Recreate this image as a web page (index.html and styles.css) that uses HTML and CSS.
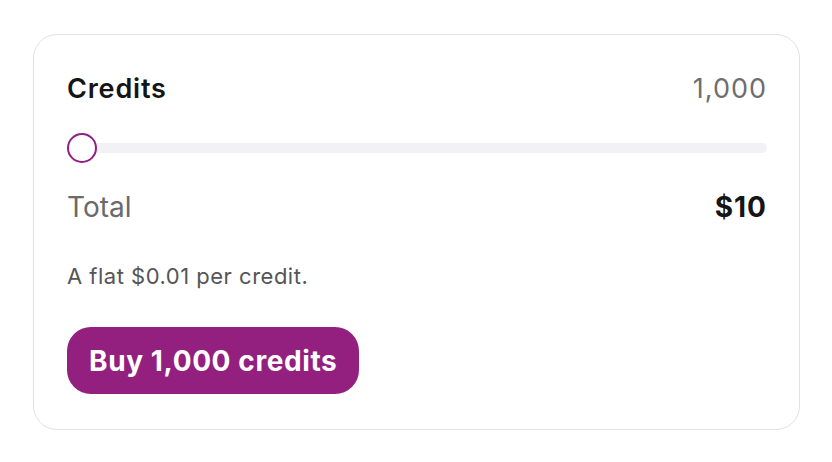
FILE: index.html
```html
<!DOCTYPE html>
<html lang="en">
<head>
  <meta charset="UTF-8" />
  <title>Buy credits</title>
  <link rel="stylesheet" href="styles.css">
</head>
<body>

  <div class="card">
    <div class="row">
      <span class="label">Credits</span>
      <span class="count">1,000</span>
    </div>

    <div class="slider">
      <div class="track"></div>
      <div class="thumb"></div>
    </div>

    <div class="row total-row">
      <span class="total">Total</span>
      <span class="price">$10</span>
    </div>

    <p class="note">A flat $0.01 per credit.</p>

    <button class="buy">Buy 1,000 credits</button>
  </div>

</body>
</html>
```

FILE: styles.css
```css
body {
  margin: 0;
  padding: 34px 33px;
  background: #fff;
  font-family: Inter, "Noto Sans", sans-serif;
}
.card {
  width: 767px;
  height: 396px;
  box-sizing: border-box;
  border: 1.5px solid #e2e2e4;
  border-radius: 24px;
  padding: 38px 32px 0 33px;
}
.row {
  display: flex;
  justify-content: space-between;
  align-items: center;
  height: 30px;
}
.label {
  font-size: 27px;
  font-weight: 600;
  letter-spacing: 0.8px;
  color: #151515;
}
.count {
  font-size: 27px;
  letter-spacing: 1px;
  color: #6e6e6e;
}
.slider {
  position: relative;
  height: 30px;
  margin-top: 30px;
  display: flex;
  align-items: center;
}
.track {
  width: 100%;
  height: 10px;
  border-radius: 5px;
  background: #f2f2f5;
}
.thumb {
  position: absolute;
  left: 0;
  top: 0;
  width: 30px;
  height: 30px;
  box-sizing: border-box;
  border-radius: 50%;
  border: 2px solid #8f1f86;
  background: #fff;
}
.total-row {
  margin-top: 29px;
}
.total {
  font-size: 28px;
  color: #6a6a6a;
}
.price {
  font-size: 28px;
  font-weight: 700;
  letter-spacing: 1px;
  color: #151515;
}
.note {
  margin: 42px 0 0;
  font-size: 22px;
  line-height: 24px;
  letter-spacing: 0.5px;
  color: #555;
}
.buy {
  margin-top: 39px;
  height: 67px;
  padding: 0 22px;
  border: none;
  border-radius: 24px;
  background: #93207f;
  color: #fff;
  font-family: Inter, "Noto Sans", sans-serif;
  font-size: 28px;
  font-weight: 700;
  letter-spacing: 0.6px;
  cursor: pointer;
}
```
